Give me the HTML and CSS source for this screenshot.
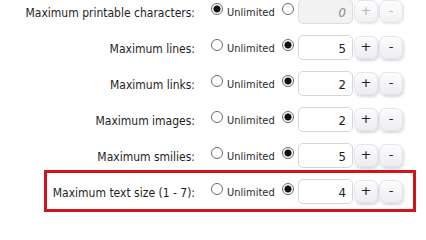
FILE: index.html
```html
<!DOCTYPE html>
<html>
<head>
<meta charset="utf-8">
<link rel="stylesheet" href="styles.css">
</head>
<body>
<div class="form">
  <div class="row">
    <label class="name">Maximum printable characters:</label>
    <input type="radio" class="radio" name="r1" checked>
    <span class="opt">Unlimited</span>
    <input type="radio" class="radio second" name="r1">
    <input type="text" class="num" value="0" disabled>
    <button class="btn" disabled>+</button>
    <button class="btn" disabled>-</button>
  </div>
  <div class="row">
    <label class="name">Maximum lines:</label>
    <input type="radio" class="radio" name="r2">
    <span class="opt">Unlimited</span>
    <input type="radio" class="radio second" name="r2" checked>
    <input type="text" class="num" value="5">
    <button class="btn">+</button>
    <button class="btn">-</button>
  </div>
  <div class="row">
    <label class="name">Maximum links:</label>
    <input type="radio" class="radio" name="r3">
    <span class="opt">Unlimited</span>
    <input type="radio" class="radio second" name="r3" checked>
    <input type="text" class="num" value="2">
    <button class="btn">+</button>
    <button class="btn">-</button>
  </div>
  <div class="row">
    <label class="name">Maximum images:</label>
    <input type="radio" class="radio" name="r4">
    <span class="opt">Unlimited</span>
    <input type="radio" class="radio second" name="r4" checked>
    <input type="text" class="num" value="2">
    <button class="btn">+</button>
    <button class="btn">-</button>
  </div>
  <div class="row">
    <label class="name">Maximum smilies:</label>
    <input type="radio" class="radio" name="r5">
    <span class="opt">Unlimited</span>
    <input type="radio" class="radio second" name="r5" checked>
    <input type="text" class="num" value="5">
    <button class="btn">+</button>
    <button class="btn">-</button>
  </div>
  <div class="highlight">
    <div class="row">
      <label class="name">Maximum text size (1 - 7):</label>
      <input type="radio" class="radio" name="r6">
      <span class="opt">Unlimited</span>
      <input type="radio" class="radio second" name="r6" checked>
      <input type="text" class="num" value="4">
      <button class="btn">+</button>
      <button class="btn">-</button>
    </div>
  </div>
</div>
</body>
</html>
```

FILE: styles.css
```css
html, body {
  margin: 0;
  padding: 0;
  background: #ffffff;
}
body {
  font-family: "DejaVu Sans Condensed", "DejaVu Sans", Tahoma, sans-serif;
  color: #222222;
}
.form {
  padding-top: 1px;
  margin-top: -8px;
}
.row {
  display: flex;
  align-items: center;
  height: 36px;
}
.name {
  flex: 0 0 195px;
  text-align: right;
  font-size: 12px;
  color: #1e1e1e;
  padding-top: 3px;
}
.highlight {
  margin: -3px 0 0 44px;
  width: 372px;
  box-sizing: border-box;
  border: 3px solid #d2151c;
}
.highlight .name {
  flex-basis: 148px;
}
.radio {
  appearance: none;
  -webkit-appearance: none;
  margin: 0 0 4px 16px;
  width: 12px;
  height: 12px;
  box-sizing: border-box;
  border: 1px solid #6a6a6a;
  border-radius: 50%;
  background: #ffffff;
  flex: 0 0 12px;
}
.radio:checked {
  background: radial-gradient(circle, #111111 0, #111111 3.2px, #ffffff 3.9px);
}
.radio.second {
  margin-left: 9px;
}
.opt {
  margin-left: 4px;
  font-size: 11px;
  color: #2a2a2a;
  width: 46px;
  padding-top: 3px;
  white-space: nowrap;
}
.num {
  margin: 0 0 0 4px;
  width: 55px;
  height: 25px;
  box-sizing: border-box;
  border: 1px solid #d6d6da;
  border-radius: 5px;
  background: #ffffff;
  text-align: right;
  padding: 2px 6px 0 0;
  font-family: "DejaVu Sans Condensed", "DejaVu Sans", Tahoma, sans-serif;
  font-size: 13px;
  color: #1a1a1a;
}
.num:disabled {
  background: #f2f2f2;
  border-color: #dddddd;
  color: #8a8a8a;
  font-style: italic;
}
.btn {
  margin: 0 0 0 1px;
  width: 24px;
  height: 23px;
  box-sizing: border-box;
  border: 1px solid #e4e4ea;
  border-radius: 7px;
  background: linear-gradient(#fdfdfe, #ececf2);
  box-shadow: 1px 2px 3px rgba(0, 0, 0, 0.16);
  font-family: "DejaVu Sans", Tahoma, sans-serif;
  font-size: 13px;
  color: #222222;
  padding: 0;
  line-height: 20px;
}
.btn:disabled {
  color: #b4b4b8;
  background: linear-gradient(#fdfdfe, #f2f2f5);
  box-shadow: 1px 1px 2px rgba(0, 0, 0, 0.1);
}
```
